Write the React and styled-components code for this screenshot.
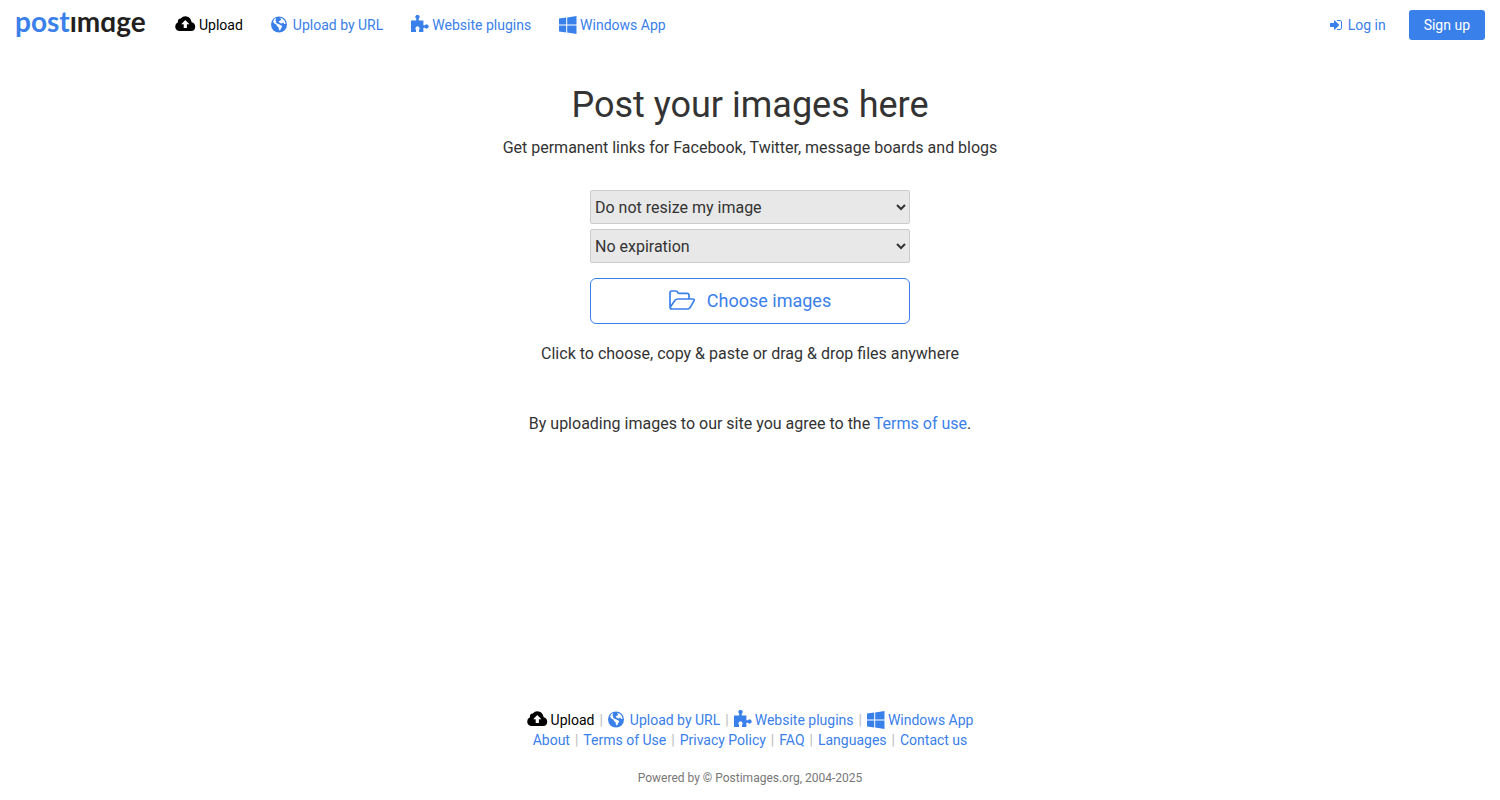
import React from "react";
import styled, { createGlobalStyle } from "styled-components";

const Global = createGlobalStyle`
  * { box-sizing: border-box; }
  html, body, #root { height: 100%; }
  body {
    margin: 0;
    background: #fff;
    color: #333;
    font-family: Roboto, "Liberation Sans", sans-serif;
    font-size: 14px;
    line-height: 20px;
  }
`;

const Page = styled.div`
  min-height: 100%;
  display: flex;
  flex-direction: column;
`;

const Header = styled.header`
  display: flex;
  align-items: center;
  min-height: 50px;
  padding: 0 15px;
`;

const Logo = styled.a`
  display: flex;
  width: 130px;
  height: 50px;
  margin-right: 16px;
  color: #231f20;
  font-family: Lato, sans-serif;
  font-size: 28px;
  font-weight: 700;
  line-height: 42px;
  text-decoration: none;
`;

const LogoBlue = styled.span`
  color: #3a80ea;
`;

const Nav = styled.nav`
  display: flex;
`;

const IconLink = styled.a`
  display: flex;
  align-items: center;
  gap: ${(p) => p.$gap || 3}px;
  color: ${(p) => (p.$active ? "#000" : "#3a80ea")};
  text-decoration: none;
`;

const NavItem = styled(IconLink)`
  padding: 15px 14px;
`;

const Account = styled.div`
  display: flex;
  align-items: center;
  gap: 9px;
  margin-left: auto;
`;

const SignUp = styled.a`
  padding: 5px 15px;
  border-radius: 3px;
  background: #3a80ea;
  color: #fff;
  text-decoration: none;
`;

const Icon = styled.svg`
  display: block;
  flex: none;
  fill: currentColor;
`;

const Main = styled.main`
  flex: 1;
  display: flex;
  flex-direction: column;
  align-items: center;
  padding: 35px 15px;
  font-size: 16px;
  line-height: 22px;
  text-align: center;
`;

const Title = styled.h1`
  margin: 0 0 12px;
  font-size: 36px;
  font-weight: 400;
  line-height: 40px;
`;

const Text = styled.p`
  margin: 0;
`;

const Form = styled.form`
  display: flex;
  flex-direction: column;
  gap: 5px;
  width: 100%;
  max-width: 320px;
  margin: 31px 0 19px;
`;

const Select = styled.select`
  width: 100%;
  height: 34px;
  border: 1px solid #ccc;
  border-radius: 2px;
  background: #e8e8e8;
  color: #333;
  font: inherit;
`;

const Choose = styled.button`
  display: flex;
  align-items: center;
  justify-content: center;
  gap: 12px;
  height: 46px;
  margin-top: 10px;
  border: 1px solid #3a80ea;
  border-radius: 6px;
  background: #fff;
  color: #3a80ea;
  font: inherit;
  font-size: 18px;
`;

const Terms = styled.p`
  margin: 48px 0 0;
`;

const Link = styled.a`
  color: #3a80ea;
  text-decoration: none;
`;

const Footer = styled.footer`
  display: flex;
  flex-direction: column;
  align-items: center;
  padding: 0 15px 12px;
`;

const FooterList = styled.ul`
  display: flex;
  justify-content: center;
  flex-wrap: wrap;
  margin: 0;
  padding: 0;
  list-style: none;
`;

const FooterItem = styled.li`
  display: flex;
  align-items: center;

  &:not(:first-child)::before {
    content: "|";
    padding: 0 5px;
    color: #bbb;
  }
`;

const Copyright = styled.small`
  margin-top: 18px;
  color: #777;
  font-size: 12px;
`;

const CloudUp = () => (
  <Icon width="21" height="20" viewBox="0 0 21 20" aria-hidden="true">
    <path
      fillRule="evenodd"
      d="M4.800 16A4.800 4.800 0 0 1 .2 11.400 4.500 4.500 0 0 1 2.900 7.200 3.300 3.300 0 0 1 5.800 3.600 5.900 5.900 0 0 1 16.200 5.800Q16.600 6.600 16.600 7.300A4.500 4.500 0 0 1 20.200 11.700 4.300 4.300 0 0 1 16 16ZM10.300 5 6.200 9.200H8.700V13H11.900V9.200H14.400Z"
    />
  </Icon>
);

const Globe = () => (
  <Icon width="16" height="18" viewBox="0 0 16 18" aria-hidden="true">
    <circle cx="8" cy="8.500" r="8" />
    <path
      fill="#fff"
      d="M3.200 3.200 4.800 2 5.200 2.900 4.200 4.300 5.400 5.200 4.700 6.300 6.500 7.800 8 8.200 10.300 9.400 11.300 10.300 10.200 12.200 8.900 14.800 7.900 13.200 7.600 11.400 6 10 5.300 8.600 3.300 7.600 2.100 5.800ZM8.800 1.800 11.800 2.700 13.800 4.900 14.700 7.700 13.300 7.900 12.200 6.600 10.900 7.500 8.900 7 7.600 5.600 9.300 4.600 10.200 3.600Z"
    />
  </Icon>
);

const Puzzle = () => (
  <Icon width="18" height="20" viewBox="0 1 18 20" aria-hidden="true">
    <path d="M0 6.500H5.200V4.600A2.100 2.100 0 1 1 7.800 4.600V6.500H12.400V11.300H14A2 2 0 1 1 14 13.700H12.400V17.900H8V15.800A2 2 0 1 0 5 15.800V17.900H0Z" />
  </Icon>
);

const Windows = () => (
  <Icon width="18" height="18" viewBox="0 0 18 18" aria-hidden="true">
    <path d="M0 2.600 7.200 1.600V8.500H0ZM8.200 1.450 17.500 0V8.500H8.200ZM0 9.500H7.200V16.400L0 15.400ZM8.200 9.500H17.500V18L8.200 16.600Z" />
  </Icon>
);

const LoginIcon = () => (
  <Icon width="13" height="14" viewBox="0 0 1664 1792" aria-hidden="true">
    <path d="M1184 896q0 26-19 45l-544 544q-19 19-45 19t-45-19-19-45v-288h-448q-26 0-45-19t-19-45v-384q0-26 19-45t45-19h448v-288q0-26 19-45t45-19 45 19l544 544q19 19 19 45zm352-352v704q0 119-84.500 203.500t-203.500 84.500h-320q-13 0-22.500-9.500t-9.500-22.500q-1-4-1-20t.500-26.500 3-23.500 10-19.500 20.500-6.500h320q66 0 113-47t47-113v-704q0-66-47-113t-113-47h-312l-11.500-1-11.500-3-8-5.500-7-9-2-13.500q-1-4-1-20t.500-26.500 3-23.500 10-19.500 20.500-6.500h320q119 0 203.500 84.500t84.500 203.500z" />
  </Icon>
);

const Folder = () => (
  <Icon width="26" height="22" viewBox="0 0 26 22" aria-hidden="true">
    <path
      d="M1 17V2.500Q1 1 2.500 1H7Q8.300 1 8.600 2.300 8.800 3.400 10 3.400H18Q20 3.400 20 5.300V9M1 17Q1 19 3 19H18.500Q20 19 21 17.800L24.800 11.200Q26 9 23.500 9H9Q7 9 6 10.300L1.300 17"
      fill="none"
      stroke="currentColor"
      strokeWidth="1.700"
      strokeLinejoin="round"
    />
  </Icon>
);

const tools = [
  { label: "Upload", Glyph: CloudUp, active: true },
  { label: "Upload by URL", Glyph: Globe, gap: 6 },
  { label: "Website plugins", Glyph: Puzzle },
  { label: "Windows App", Glyph: Windows },
];

const pages = ["About", "Terms of Use", "Privacy Policy", "FAQ", "Languages", "Contact us"];

export default function App() {
  return (
    <Page>
      <Global />
      <Header>
        <Logo href="#" aria-label="postimage">
          <LogoBlue>post</LogoBlue>ımɑge
        </Logo>
        <Nav>
          {tools.map(({ label, Glyph, active, gap }) => (
            <NavItem key={label} href="#" $active={active} $gap={gap}>
              <Glyph />
              {label}
            </NavItem>
          ))}
        </Nav>
        <Account>
          <NavItem href="#" $gap={5}>
            <LoginIcon />
            Log in
          </NavItem>
          <SignUp href="#">Sign up</SignUp>
        </Account>
      </Header>
      <Main>
        <Title>Post your images here</Title>
        <Text>Get permanent links for Facebook, Twitter, message boards and blogs</Text>
        <Form>
          <Select aria-label="Image size">
            <option>Do not resize my image</option>
          </Select>
          <Select aria-label="Expiration">
            <option>No expiration</option>
          </Select>
          <Choose type="button">
            <Folder />
            Choose images
          </Choose>
        </Form>
        <Text>Click to choose, copy &amp; paste or drag &amp; drop files anywhere</Text>
        <Terms>
          By uploading images to our site you agree to the <Link href="#">Terms of use</Link>.
        </Terms>
      </Main>
      <Footer>
        <FooterList>
          {tools.map(({ label, Glyph, active, gap }) => (
            <FooterItem key={label}>
              <IconLink href="#" $active={active} $gap={gap}>
                <Glyph />
                {label}
              </IconLink>
            </FooterItem>
          ))}
        </FooterList>
        <FooterList>
          {pages.map((label) => (
            <FooterItem key={label}>
              <Link href="#">{label}</Link>
            </FooterItem>
          ))}
        </FooterList>
        <Copyright>Powered by © Postimages.org, 2004-2025</Copyright>
      </Footer>
    </Page>
  );
}
